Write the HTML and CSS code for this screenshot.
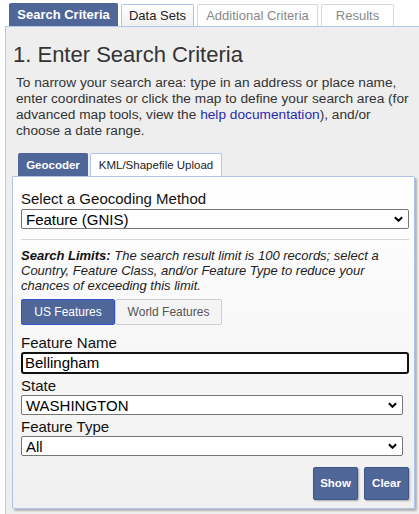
FILE: index.html
```html
<!DOCTYPE html>
<html>
<head>
<meta charset="utf-8">
<link rel="stylesheet" href="styles.css">
</head>
<body>
<div class="tabs">
  <div class="tab active">Search Criteria</div>
  <div class="tab normal">Data Sets</div>
  <div class="tab disabled addl">Additional Criteria</div>
  <div class="tab disabled results">Results</div>
</div>
<div class="panel">
  <h1 class="title">1. Enter Search Criteria</h1>
  <p class="intro">To narrow your search area: type in an address or place name, enter coordinates or click the map to define your search area (for advanced map tools, view the <a class="link" href="#">help documentation</a>), and/or choose a date range.</p>
  <div class="subtabs">
    <div class="subtab active">Geocoder</div>
    <div class="subtab normal">KML/Shapefile Upload</div>
  </div>
  <div class="box">
    <label class="label first">Select a Geocoding Method</label>
    <div class="select wide"><span>Feature (GNIS)</span><svg class="chev" viewBox="0 0 10 6" width="9" height="6"><path d="M1 1 L5 5 L9 1" fill="none" stroke="#000" stroke-width="2.2"/></svg></div>
    <div class="rule"></div>
    <p class="limits"><b>Search Limits:</b> The search result limit is 100 records; select a Country, Feature Class, and/or Feature Type to reduce your chances of exceeding this limit.</p>
    <div class="btngroup">
      <div class="gbtn on">US Features</div>
      <div class="gbtn off">World Features</div>
    </div>
    <label class="label after-group">Feature Name</label>
    <div class="input">Bellingham</div>
    <label class="label">State</label>
    <div class="select narrow"><span>WASHINGTON</span><svg class="chev" viewBox="0 0 10 6" width="9" height="6"><path d="M1 1 L5 5 L9 1" fill="none" stroke="#000" stroke-width="2.2"/></svg></div>
    <label class="label">Feature Type</label>
    <div class="select narrow"><span>All</span><svg class="chev" viewBox="0 0 10 6" width="9" height="6"><path d="M1 1 L5 5 L9 1" fill="none" stroke="#000" stroke-width="2.2"/></svg></div>
    <div class="actions">
      <div class="abtn">Show</div>
      <div class="abtn">Clear</div>
    </div>
  </div>
</div>
</body>
</html>
```
FILE: styles.css
```css
html, body {
  margin: 0;
  padding: 0;
  background: #ffffff;
  font-family: "Liberation Sans", Arial, sans-serif;
  color: #333;
  overflow: hidden;
}
.tabs {
  display: flex;
  padding: 3px 0 0 9px;
  gap: 3px;
  height: 23px;
}
.tab {
  height: 22px;
  box-sizing: border-box;
  font-size: 13px;
  line-height: 21px;
  text-align: center;
  border: 1px solid #d8d8d8;
  border-bottom: none;
  border-radius: 2px 2px 0 0;
}
.tab.active {
  width: 109px;
  height: 23px;
  background: #4f6699;
  border-color: #4f6699;
  color: #fff;
  font-weight: bold;
}
.tab.normal {
  width: 73px;
  background: linear-gradient(#ffffff, #f0f0f0);
  border-color: #aec4ea;
  color: #222;
  margin-top: 1px;
}
.tab.disabled {
  background: #fff;
  color: #888;
  margin-top: 1px;
}
.tab.addl { width: 121px; }
.tab.results { width: 73px; }

.panel {
  margin-left: 5px;
  border-top: 1px solid #b3c7ea;
  border-left: 1px solid #b3c7ea;
  background: #eeeeee;
  padding: 0 0 6px 6px;
  height: 500px;
}
.title {
  margin: 0;
  padding: 15px 0 0 1px;
  font-size: 22px;
  font-weight: normal;
  line-height: 26px;
  color: #333;
}
.intro {
  margin: 7px 0 0 4px;
  font-size: 13.7px;
  line-height: 16px;
  color: #333;
  padding-right: 8px;
}
.link { color: #2a2ab0; text-decoration: none; }
.subtabs {
  display: flex;
  gap: 2px;
  margin: 14px 0 0 6px;
  height: 23px;
}
.subtab {
  box-sizing: border-box;
  height: 23px;
  font-size: 11.5px;
  line-height: 22px;
  text-align: center;
  border: 1px solid #aec4ea;
  border-bottom: none;
  border-radius: 2px 2px 0 0;
}
.subtab.active {
  width: 70px;
  background: #4f6699;
  border-color: #4f6699;
  color: #fff;
  font-weight: bold;
}
.subtab.normal {
  width: 132px;
  background: #fff;
  color: #222;
}
.box {
  width: 387px;
  border: 1px solid #aec4ea;
  border-radius: 0 2px 2px 2px;
  background: linear-gradient(#ffffff, #f0f0f0);
  box-shadow: 2px 2px 2px rgba(0,0,0,0.25);
  padding: 13px 6px 8px 8px;
  display: flex;
  flex-direction: column;
  color: #111;
}
.label {
  display: block;
  font-size: 15px;
  line-height: 17px;
  margin-top: 3px;
  color: #111;
}
.label.first { margin-top: 0; }
.label.after-group { margin-top: 9px; }
.select {
  box-sizing: border-box;
  height: 20px;
  border: 1px solid #767676;
  border-radius: 2px;
  background: #fff;
  display: flex;
  align-items: center;
  justify-content: space-between;
  padding: 0 5px 0 4px;
  font-size: 15px;
  color: #000;
  margin-top: 2px;
}
.select.wide { width: 388px; }
.select.narrow { width: 382px; margin-top: 1px; }
.chev { flex: none; }
.rule {
  width: 388px;
  height: 1px;
  background: #d6d6d6;
  margin: 10px 0 8px;
}
.limits {
  margin: 0;
  font-size: 13px;
  line-height: 15px;
  font-style: italic;
  color: #222;
  padding-right: 4px;
}
.limits b { color: #111; }
.btngroup {
  display: flex;
  margin-top: 6px;
}
.gbtn {
  box-sizing: border-box;
  height: 26px;
  font-size: 12px;
  line-height: 24px;
  text-align: center;
  border-radius: 2px;
}
.gbtn.on {
  width: 94px;
  background: #4f6699;
  border: 1px solid #2d55c8;
  color: #fff;
}
.gbtn.off {
  width: 107px;
  background: #f4f4f4;
  border: 1px solid #cfcfcf;
  color: #555;
}
.input {
  box-sizing: border-box;
  width: 388px;
  height: 22px;
  border: 2px solid #111;
  border-radius: 3px;
  background: #fff;
  font-size: 15px;
  line-height: 18px;
  padding-left: 2px;
  color: #000;
  margin-top: 1px;
}
.actions {
  display: flex;
  justify-content: flex-end;
  gap: 6px;
  margin-top: 11px;
  width: 388px;
}
.abtn {
  box-sizing: border-box;
  width: 45px;
  height: 33px;
  background: #4f6699;
  border: 1px solid #3f5688;
  border-radius: 2px;
  box-shadow: 1px 1px 2px rgba(0,0,0,0.3);
  color: #fff;
  font-weight: bold;
  font-size: 11.5px;
  line-height: 31px;
  text-align: center;
}
```
